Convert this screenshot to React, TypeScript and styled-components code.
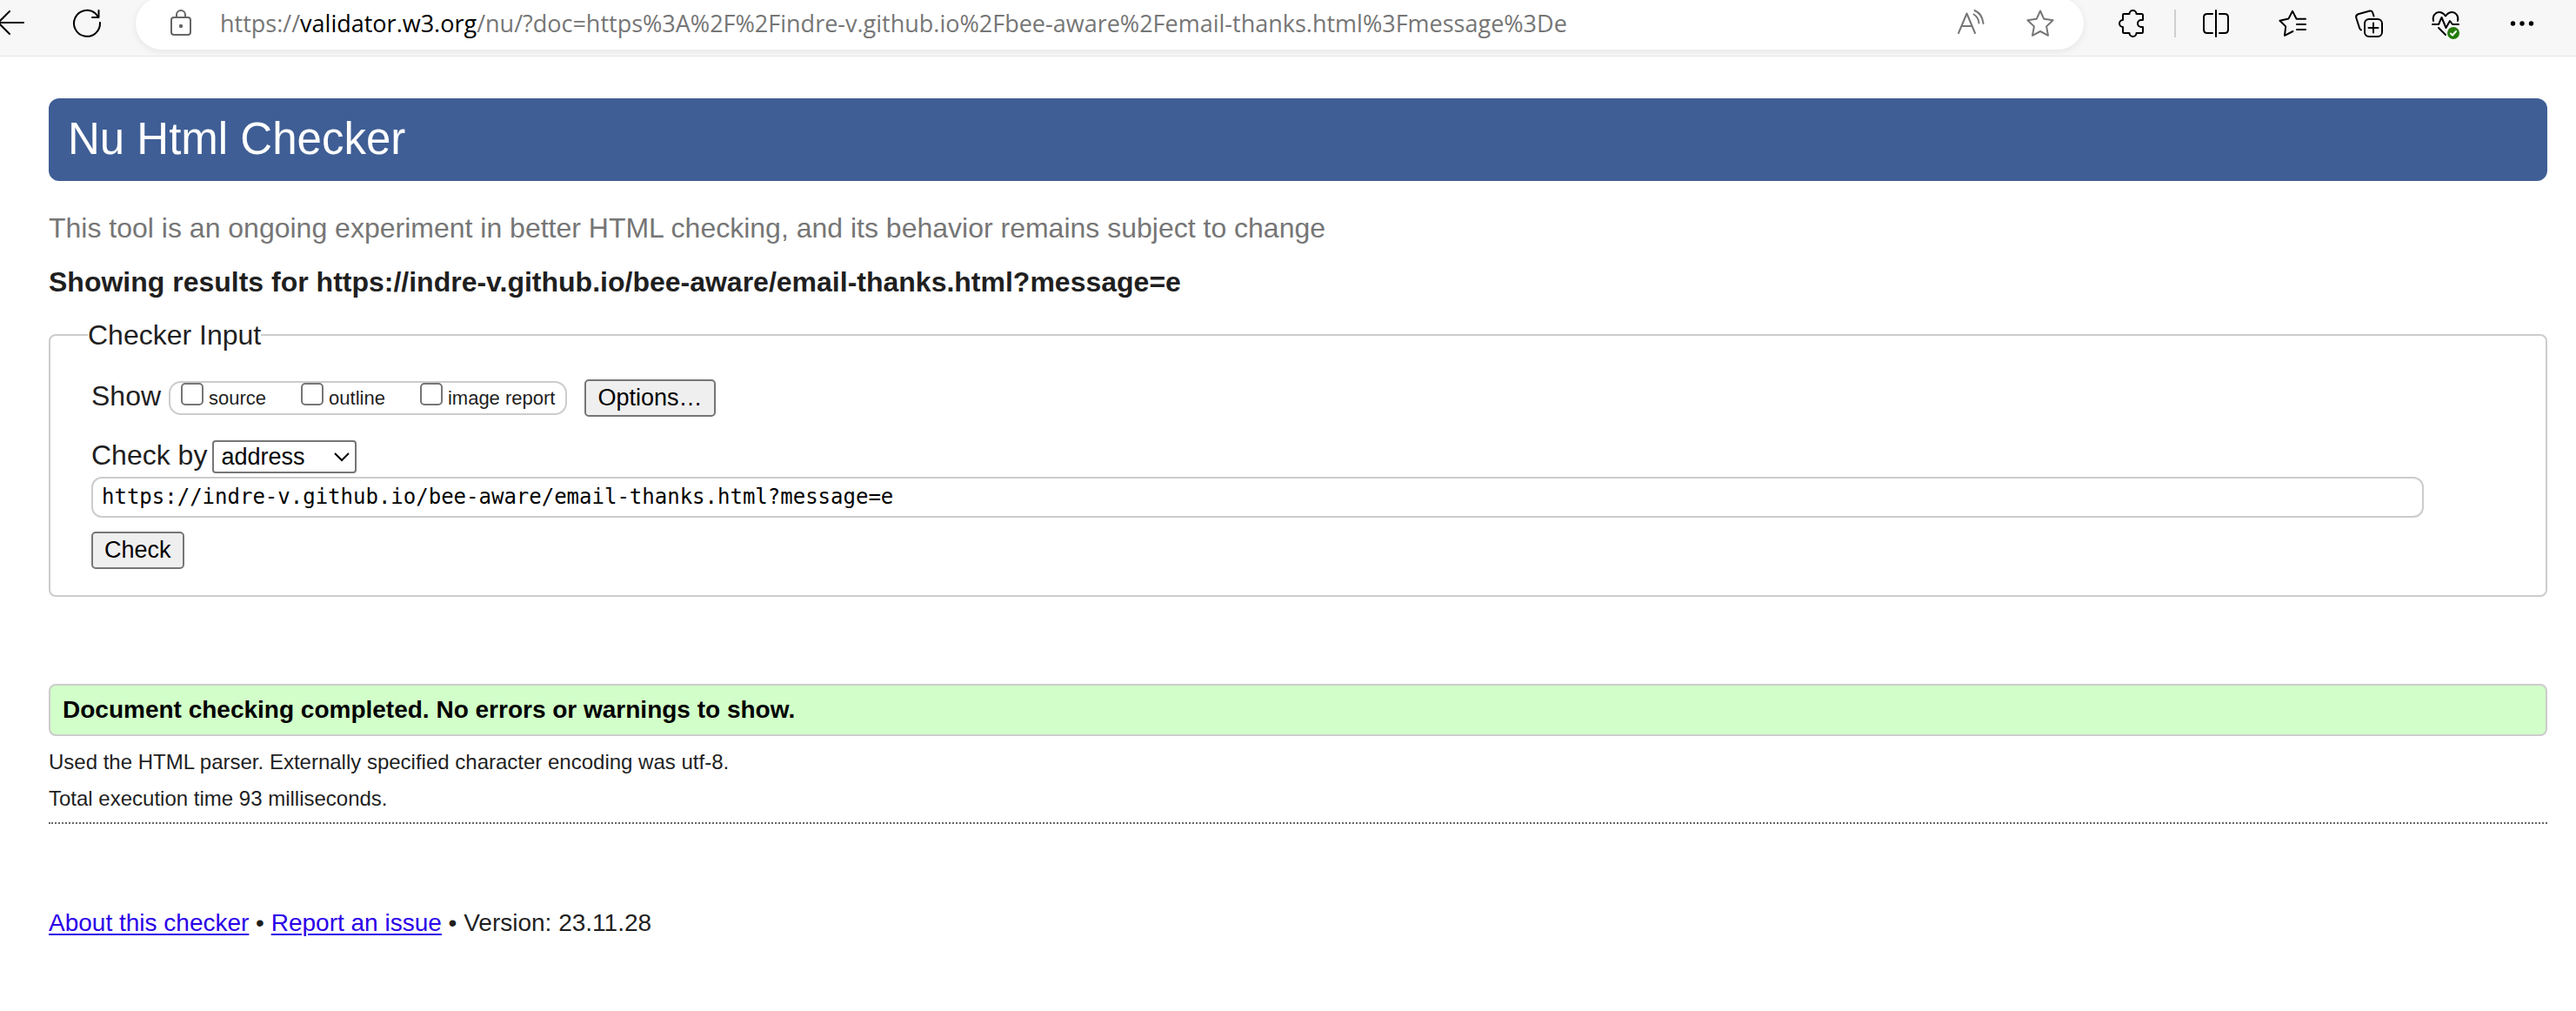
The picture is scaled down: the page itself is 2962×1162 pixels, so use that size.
import React, { useState } from "react";
import styled, { createGlobalStyle } from "styled-components";

const GlobalStyle = createGlobalStyle`
  *, *::before, *::after { box-sizing: border-box; }
  body {
    margin: 0;
    background: #fff;
    color: #1f1f1f;
    font-family: "Liberation Sans", Arial, sans-serif;
    font-size: 32px;
    line-height: 40px;
  }
`;

const Toolbar = styled.header`
  display: flex;
  align-items: center;
  height: 65px;
  padding: 0 18px 10px 0;
  overflow: hidden;
  background: #f7f7f7;
  border-bottom: 1px solid #e5e5e5;
`;

const IconButton = styled.button<{ $width: number; $color?: string }>`
  display: flex;
  flex: none;
  align-items: center;
  justify-content: center;
  width: ${(p) => p.$width}px;
  height: 40px;
  padding: 0;
  border: 0;
  background: none;
  color: ${(p) => p.$color ?? "#000"};
`;

const Icon = styled.svg`
  width: 40px;
  height: 40px;
  fill: none;
  stroke: currentColor;
  stroke-width: 2;
  stroke-linecap: round;
  stroke-linejoin: round;
`;

const BackButton = styled(IconButton)`
  justify-content: flex-start;
`;

const AddressBar = styled.div`
  display: flex;
  flex: 1;
  align-items: center;
  min-width: 0;
  height: 60px;
  margin: 0 12px;
  padding: 0 10px 0 32px;
  border-radius: 30px;
  background: #fff;
  box-shadow: 0 2px 8px rgba(0, 0, 0, 0.08);
`;

const AddressText = styled.div`
  flex: 1;
  min-width: 0;
  margin-left: 25px;
  overflow: hidden;
  color: #767676;
  font-family: "Open Sans", "Noto Sans", sans-serif;
  font-size: 27px;
  line-height: 40px;
  white-space: nowrap;
`;

const Domain = styled.span`
  color: #000;
`;

const Divider = styled.div`
  flex: none;
  width: 2px;
  height: 32px;
  margin: 0 2px 0 4px;
  background: #cfcfcf;
`;

const Page = styled.main`
  padding: 48px 33px 48px 56px;
`;

const Banner = styled.h1`
  margin: 0;
  padding: 15px 22px 16px;
  border-radius: 12px;
  background: #3f5e95;
  color: #fff;
  font-size: 51px;
  font-weight: 400;
  line-height: 64px;
`;

const Tagline = styled.p`
  margin: 34px 0 0;
  color: #767676;
`;

const Showing = styled.h2`
  margin: 22px 0 0;
  font-size: 32px;
  font-weight: 700;
`;

const Panel = styled.fieldset`
  min-width: 0;
  margin: 21px 0 0;
  padding: 30px 47px;
  border: 2px solid #ccc;
  border-radius: 8px;
`;

const PanelTitle = styled.legend`
  margin-left: -4px;
  padding: 0;
`;

const Row = styled.div<{ $top?: number }>`
  display: flex;
  align-items: baseline;
  margin-top: ${(p) => p.$top ?? 0}px;
`;

const ShowGroup = styled.div`
  display: flex;
  gap: 40px;
  height: 39px;
  margin: 0 20px 0 9px;
  padding: 0 12px;
  border: 2px solid #ccc;
  border-radius: 14px;
`;

const Choice = styled.label`
  display: flex;
  gap: 6px;
  font-size: 22px;
  line-height: 36px;
`;

const Tick = styled.input`
  width: 26px;
  height: 26px;
  margin: 0;
  border: 2px solid #767676;
  border-radius: 5px;
  background: #fff;
  appearance: none;
  &:checked {
    background: #0075ff;
  }
`;

const Button = styled.button`
  display: block;
  height: 43px;
  padding: 0 13px;
  border: 2px solid #767676;
  border-radius: 5px;
  background: #efefef;
  color: #000;
  font-family: inherit;
  font-size: 27px;
  line-height: 36px;
`;

const SelectBox = styled.div`
  display: grid;
  align-items: center;
  width: 166px;
  margin-left: 6px;
  > * {
    grid-area: 1 / 1;
  }
`;

const Select = styled.select`
  width: 100%;
  height: 38px;
  padding: 0 8px;
  border: 2px solid #767676;
  border-radius: 4px;
  background: #fff;
  color: #000;
  font-family: inherit;
  font-size: 27px;
  appearance: none;
`;

const Chevron = styled.svg`
  justify-self: end;
  width: 18px;
  height: 12px;
  margin-right: 8px;
  fill: none;
  stroke: #000;
  stroke-width: 2;
  pointer-events: none;
`;

const UrlField = styled.input`
  display: block;
  width: calc(100% - 93px);
  height: 47px;
  margin: 4px 0 16px;
  padding: 0 10px;
  border: 2px solid #ccc;
  border-radius: 12px;
  background: #fff;
  color: #000;
  font-family: "DejaVu Sans Mono", monospace;
  font-size: 24px;
`;

const Success = styled.p`
  margin: 100px 0 0;
  padding: 10px 14px;
  border: 2px solid #ccc;
  border-radius: 8px;
  background: #d2ffc9;
  color: #000;
  font-size: 28px;
  font-weight: 700;
  line-height: 36px;
`;

const Details = styled.div`
  padding: 9px 0 6px;
  border-bottom: 2px dotted #666;
  font-size: 24px;
  line-height: 42px;
`;

const Detail = styled.p`
  margin: 0;
`;

const Footer = styled.footer`
  margin-top: 94px;
  font-size: 28px;
`;

const Link = styled.a`
  color: #2a00e8;
  text-decoration-thickness: 2px;
  text-underline-offset: 3px;
`;

const star = "M20 5.5 L24.3 14.8 L34.6 16.2 L27.1 23.4 L29 33.8 L20 29 L11 33.8 L12.9 23.4 L5.4 16.2 L15.7 14.8 Z";

export default function App() {
  const [url, setUrl] = useState("https://indre-v.github.io/bee-aware/email-thanks.html?message=e");
  return (
    <>
      <GlobalStyle />
      <Toolbar>
        <BackButton $width={56} aria-label="Back">
          <Icon viewBox="0 0 40 40">
            <path d="M27 19H-1M11 6L-2 19L11 32" />
          </Icon>
        </BackButton>
        <IconButton $width={88} aria-label="Refresh">
          <Icon viewBox="0 0 40 40">
            <path d="M35 19A15 15 0 1 1 29.5 8.2L33.5 13M33.5 5V13H26" />
          </Icon>
        </IconButton>
        <AddressBar>
          <IconButton $width={40} $color="#666" aria-label="Site information">
            <Icon viewBox="0 0 40 40">
              <rect x="9" y="13" width="22" height="20" rx="3" />
              <path d="M15 13V10A5 5 0 0 1 25 10V13" />
              <circle cx="20" cy="23" r="1.2" fill="currentColor" />
            </Icon>
          </IconButton>
          <AddressText>
            https://<Domain>validator.w3.org</Domain>
            /nu/?doc=https%3A%2F%2Findre-v.github.io%2Fbee-aware%2Femail-thanks.html%3Fmessage%3De
          </AddressText>
          <IconButton $width={80} $color="#767676" aria-label="Read aloud">
            <Icon viewBox="0 0 40 40">
              <path d="M6 31L15.5 8.5L25 31M9.5 23H21.5M23.5 9.5Q29 13 29.5 19.5M24.5 5Q33.5 9 34.5 20" />
            </Icon>
          </IconButton>
          <IconButton $width={80} $color="#767676" aria-label="Add to favorites">
            <Icon viewBox="0 0 40 40">
              <path d={star} />
            </Icon>
          </IconButton>
        </AddressBar>
        <IconButton $width={88} aria-label="Extensions">
          <Icon viewBox="0 0 40 40">
            <path d="M10 9H16.5A4 4 0 0 1 24.5 9H30.5Q32 9 32 10.5V16H30A4 4 0 0 0 30 24H32V29.5Q32 31 30.5 31H24.5A4 4 0 0 1 16.5 31H10.5Q9 31 9 29.5V24A4 4 0 0 1 9 16V10Q9 9 10 9Z" />
          </Icon>
        </IconButton>
        <Divider />
        <IconButton $width={88} aria-label="Split screen">
          <Icon viewBox="0 0 40 40">
            <path d="M16 9H10Q6 9 6 13V27Q6 31 10 31H16M24 9H30Q34 9 34 13V27Q34 31 30 31H24M20 5V35" />
          </Icon>
        </IconButton>
        <IconButton $width={88} aria-label="Favorites">
          <Icon viewBox="0 0 40 40">
            <path d="M20.5 29L11 33.8L12.2 23.4L5.4 16.8L15.4 14.6L20 5.8L24.6 14.8H35M25 21H35M25 27H35" />
          </Icon>
        </IconButton>
        <IconButton $width={88} aria-label="Collections">
          <Icon viewBox="0 0 40 40">
            <rect x="15" y="15" width="20" height="20" rx="5" />
            <path d="M25 19.5V30.5M19.5 25H30.5M11 27.5Q9.5 27 9 25L5.3 13.5Q4.5 10.5 7.5 9.3L21 5.5Q23.5 5 24.2 7.5L25.5 11.5" />
          </Icon>
        </IconButton>
        <IconButton $width={88} aria-label="Browser essentials">
          <Icon viewBox="0 0 40 40">
            <path d="M6 17C4.5 10.5 9 7 12.5 7C17 7 18.5 9.5 20 11.5C21.5 9.5 23 7 27.5 7C31 7 35.5 10.5 34 17M5 21H12L15.5 13L20.5 25L25 17L28 21H35M12 25L20 33" />
            <circle cx="29" cy="31" r="7" fill="#237b0b" stroke="none" />
            <path d="M26 31.5L28 33.5L32 29" stroke="#fff" />
          </Icon>
        </IconButton>
        <IconButton $width={88} aria-label="Settings and more">
          <Icon viewBox="0 0 40 40">
            <g fill="currentColor" stroke="none">
              <circle cx="9.5" cy="20" r="2.7" />
              <circle cx="20" cy="20" r="2.7" />
              <circle cx="30.5" cy="20" r="2.7" />
            </g>
          </Icon>
        </IconButton>
      </Toolbar>

      <Page>
        <Banner>Nu Html Checker</Banner>
        <Tagline>This tool is an ongoing experiment in better HTML checking, and its behavior remains subject to change</Tagline>
        <Showing>Showing results for https://indre-v.github.io/bee-aware/email-thanks.html?message=e</Showing>

        <Panel>
          <PanelTitle>Checker Input</PanelTitle>
          <Row>
            <span>Show</span>
            <ShowGroup>
              {["source", "outline", "image report"].map((name) => (
                <Choice key={name}>
                  <Tick type="checkbox" />
                  <span>{name}</span>
                </Choice>
              ))}
            </ShowGroup>
            <Button type="button">Options…</Button>
          </Row>
          <Row $top={24}>
            <label htmlFor="method">Check by</label>
            <SelectBox>
              <Select id="method" defaultValue="address">
                <option value="address">address</option>
                <option value="upload">file upload</option>
                <option value="text">text input</option>
              </Select>
              <Chevron viewBox="0 0 18 12">
                <path d="M1 2L9 10L17 2" />
              </Chevron>
            </SelectBox>
          </Row>
          <UrlField aria-label="Address" value={url} onChange={(e) => setUrl(e.target.value)} />
          <Button type="submit">Check</Button>
        </Panel>

        <Success>Document checking completed. No errors or warnings to show.</Success>
        <Details>
          <Detail>Used the HTML parser. Externally specified character encoding was utf-8.</Detail>
          <Detail>Total execution time 93 milliseconds.</Detail>
        </Details>

        <Footer>
          <Link href="#about">About this checker</Link> • <Link href="#issue">Report an issue</Link> • Version: 23.11.28
        </Footer>
      </Page>
    </>
  );
}
